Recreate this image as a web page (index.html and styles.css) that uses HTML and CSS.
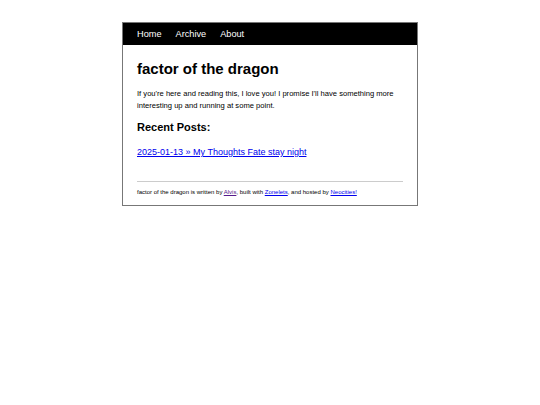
FILE: index.html
```html
<!DOCTYPE html>
<html>
<head>
<meta charset="utf-8">
<title>factor of the dragon</title>
<link rel="stylesheet" href="styles.css">
</head>
<body>
<div class="page">
  <nav class="nav">
    <a href="#">Home</a>
    <a href="#">Archive</a>
    <a href="#">About</a>
  </nav>
  <main class="content">
    <h1 class="title">factor of the dragon</h1>
    <p class="intro">If you're here and reading this, I love you! I promise I'll have something more interesting up and running at some point.</p>
    <h2 class="subtitle">Recent Posts:</h2>
    <ul class="posts">
      <li><a href="#">2025-01-13 » My Thoughts Fate stay night</a></li>
    </ul>
    <hr class="rule">
    <footer class="footer">factor of the dragon is written by <a class="visited" href="#">Alvis</a>, built with <a href="#">Zonelets</a>, and hosted by <a href="#">Neocities!</a></footer>
  </main>
</div>
</body>
</html>
```
FILE: styles.css
```css
html, body {
  margin: 0;
  padding: 0;
  background: #fff;
}
body {
  font-family: "Liberation Sans", Arial, sans-serif;
  color: #000;
  padding-top: 22px;
}
.page {
  width: 294px;
  margin: 0 auto;
  border: 1px solid #777;
}
.nav {
  background: #000;
  height: 22px;
  display: flex;
  align-items: center;
  gap: 14px;
  padding: 0 14px;
}
.nav a {
  color: #fff;
  text-decoration: none;
  font-size: 9.2px;
}
.content {
  padding: 15px 14px 9px;
}
.title {
  font-size: 15px;
  font-weight: bold;
  margin: 0 0 10px;
  line-height: 18px;
}
.intro {
  font-size: 7.6px;
  line-height: 11.5px;
  margin: 0 0 9px;
}
.subtitle {
  font-size: 11px;
  margin: 0 0 10px;
  line-height: 14px;
}
.posts {
  list-style: none;
  margin: 0;
  padding: 0;
  line-height: 12px;
}
.posts a {
  font-size: 9px;
  color: #0000ee;
}
.rule {
  border: 0;
  border-top: 1px solid #ccc;
  margin: 23px 0 6px;
}
.footer {
  font-size: 6px;
  line-height: 8px;
}
.footer a {
  color: #0000ee;
}
.footer a.visited {
  color: #551a8b;
}
```
